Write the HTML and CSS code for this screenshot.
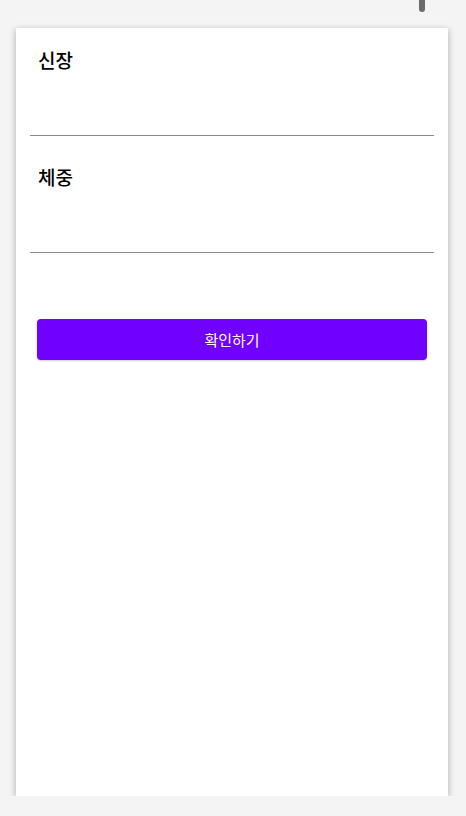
FILE: index.html
```html
<!DOCTYPE html>
<html lang="ko">
<head>
    <meta charset="UTF-8">
    <meta name="viewport" content="width=device-width, initial-scale=1.0">
    <title>BMI</title>
    <link rel="stylesheet" href="styles.css">
</head>
<body>
    <div class="scroll-thumb"></div>
    <main class="card">
        <div class="field">
            <label class="field-label" for="height">신장</label>
            <input class="field-input" id="height" type="text">
        </div>
        <div class="field">
            <label class="field-label" for="weight">체중</label>
            <input class="field-input" id="weight" type="text">
        </div>
        <button class="submit">확인하기</button>
    </main>
</body>
</html>
```

FILE: styles.css
```css
body {
    margin: 0;
    background-color: #f4f4f4;
    font-family: "Noto Sans CJK KR", "Noto Sans", sans-serif;
    color: #111;
}
.scroll-thumb {
    position: absolute;
    top: 0;
    left: 419px;
    width: 6px;
    height: 12px;
    border-radius: 0 0 3px 3px;
    background-color: #6b6b6b;
}
.card {
    box-sizing: border-box;
    width: 432px;
    height: 768px;
    margin: 28px 0 0 16px;
    padding: 18px 14px;
    background-color: #fff;
    box-shadow: 0 2px 7px rgba(0, 0, 0, 0.3);
    display: flex;
    flex-direction: column;
}
.field {
    display: flex;
    flex-direction: column;
}
.field + .field {
    margin-top: 27px;
}
.field-label {
    padding: 0 8px;
    font-size: 19px;
    line-height: 27px;
    font-weight: 500;
    color: #000;
}
.field-input {
    box-sizing: border-box;
    height: 63px;
    border: none;
    border-bottom: 1px solid #8a8a8a;
    outline: none;
    background: transparent;
    font: inherit;
}
.submit {
    margin: 66px 7px 0;
    height: 41px;
    border: none;
    border-radius: 4px;
    background-color: #7000ff;
    color: #fff;
    font-family: inherit;
    font-size: 15px;
    box-shadow: 0 1px 2px rgba(0, 0, 0, 0.2);
}
```
